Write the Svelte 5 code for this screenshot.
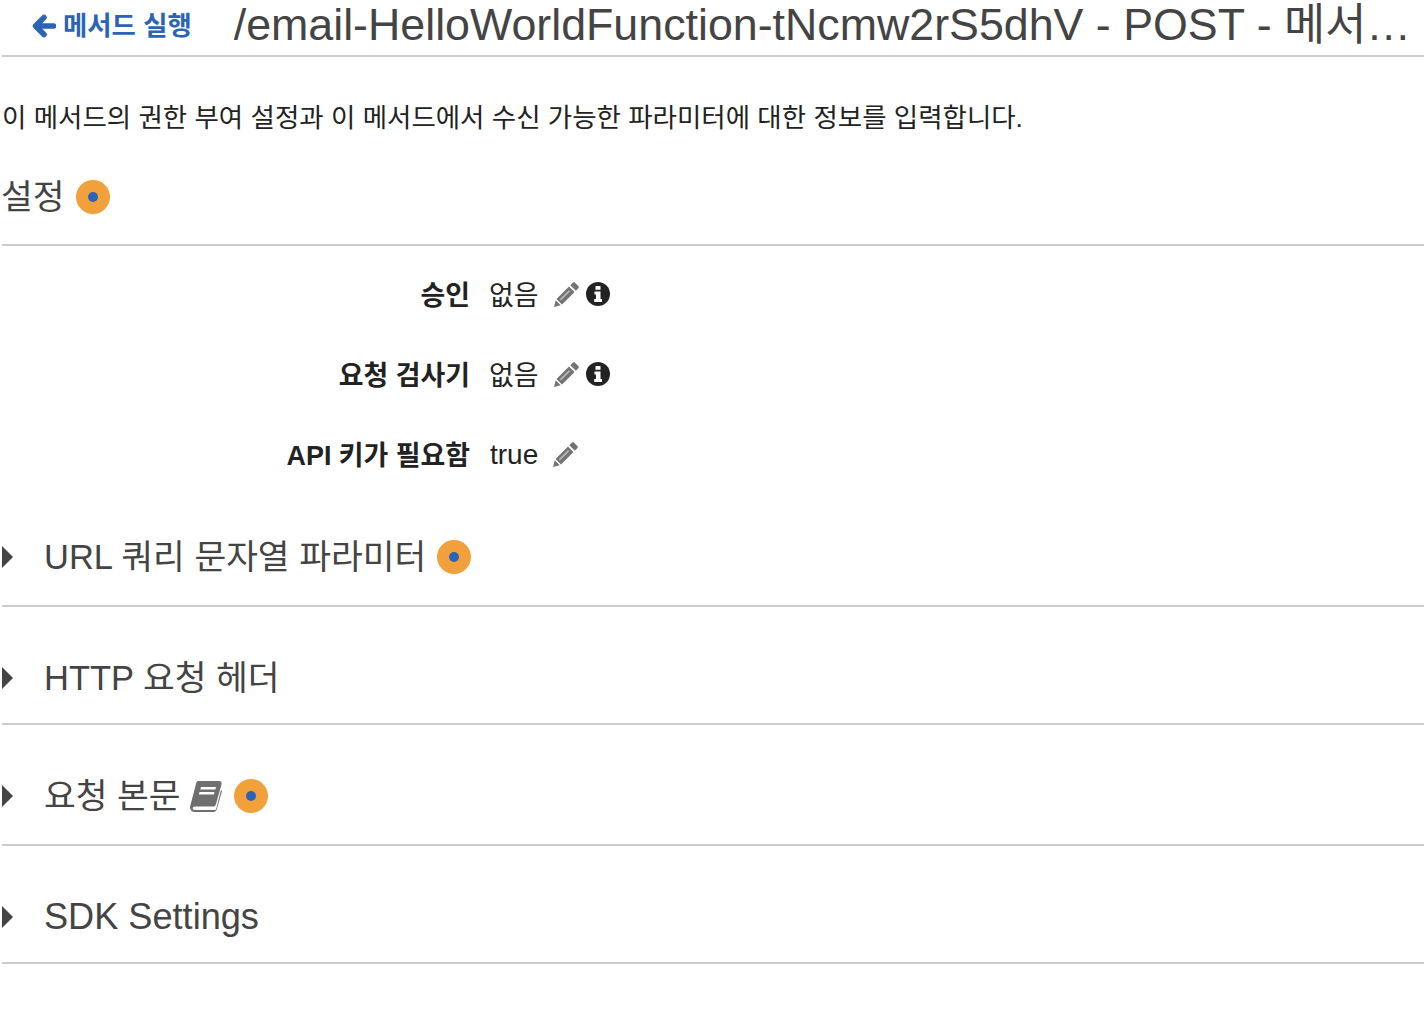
<script lang="ts">
	const settings = [
		{ label: '승인', value: '없음', info: true },
		{ label: '요청 검사기', value: '없음', info: true },
		{ label: 'API 키가 필요함', value: 'true', info: false }
	];
</script>

{#snippet dot()}
	<span class="dot"><span></span></span>
{/snippet}

{#snippet section(title, latin, badge, book)}
	<div class="section">
		<svg class="caret" viewBox="0 0 11 22" width="11" height="22"><path d="M0 0l11 11L0 22z" fill="#444" /></svg>
		<h3 class:latin>{title}</h3>
		{#if book}
			<svg class="book" viewBox="0 0 34 32" width="34" height="32">
				<path d="M9 1h21c2 0 3 1.500 2.500 3.500L27 24c-.5 2-1.500 2.500-3 2.500H6c-2 0-2.500 1-2.200 2 .3 1 1.200 1.500 2.700 1.500h19c1 0 1.500-.5 1.800-1.500L32 10l1 1-5.200 18.500C27.200 31 26 32 24.500 32H6C3 32 1 30 1 27.500c0-.8.100-1.500.4-2.300L7 4c.4-1.800 1-3 2-3z" fill="#6f6f6f" />
				<path d="M12 7h15l-.6 2.500h-15zM10.500 12h15l-.6 2.500h-15z" fill="#fff" />
			</svg>
		{/if}
		{#if badge}{@render dot()}{/if}
	</div>
{/snippet}

<div class="page">
	<header class="head">
		<a class="back" href="#top">
			<svg viewBox="0 0 24 24" width="24" height="24"><path d="M12 3.500L3.500 12l8.500 8.500M4.500 12H21.500" fill="none" stroke="#2b64b5" stroke-width="5.500" stroke-linecap="round" stroke-linejoin="round" /></svg>
			메서드 실행
		</a>
		<h1>/email-HelloWorldFunction-tNcmw2rS5dhV - POST - 메서드 실행</h1>
	</header>

	<p class="intro">이 메서드의 권한 부여 설정과 이 메서드에서 수신 가능한 파라미터에 대한 정보를 입력합니다.</p>

	<div class="settings-head">
		<h2>설정</h2>
		{@render dot()}
	</div>

	<div class="settings">
		{#each settings as row}
			<div class="row">
				<div class="label">{row.label}</div>
				<div class="value">
					<span class:latin={!row.info}>{row.value}</span>
					<svg class="pencil" viewBox="0 0 25 25" width="25" height="25">
						<path d="M19 .500c.6-.5 1.300-.5 1.800 0l3.700 3.700c.5.500.5 1.200 0 1.800l-2.700 2.700-5.500-5.500zM15 4.500l5.500 5.500L8 22.500 2.500 17zM1.700 18.300l5 5L0 25z" fill="#737373" />
						<path d="M15 8l1.300 1.300L7 18.600l-1.300-1.300z" fill="#b5b5b5" />
					</svg>
					{#if row.info}
						<svg class="info" viewBox="0 0 24 24" width="24" height="24">
							<circle cx="12" cy="12" r="12" fill="#222" />
							<path d="M9.500 4h5v3.800h-5zM8.500 9.500h6V17H16v3H8.200v-3H10v-4.500H8.500z" fill="#fff" />
						</svg>
					{/if}
				</div>
			</div>
		{/each}
	</div>

	<div class="sections">
		{@render section('URL 쿼리 문자열 파라미터', false, true, false)}
		{@render section('HTTP 요청 헤더', false, false, false)}
		{@render section('요청 본문', false, true, true)}
		{@render section('SDK Settings', true, false, false)}
	</div>
</div>

<style>
	:global(body) {
		background: #fff;
	}

	.page {
		padding-left: 2px;
		height: 1030px;
		overflow: hidden;
		font-family: 'Liberation Sans', 'Noto Sans CJK KR', sans-serif;
		color: #222;
	}

	.head {
		display: flex;
		align-items: center;
		height: 48px;
		padding: 0 10px 7px 30px;
		border-bottom: 2px solid #ccc;
	}

	.back {
		display: flex;
		align-items: center;
		gap: 7px;
		flex: none;
		font-size: 26.400px;
		font-weight: 700;
		color: #2b64b5;
		text-decoration: none;
		margin: -2px 42px 0 0;
	}

	.back svg {
		margin-top: 6px;
	}

	h1 {
		margin: -8px 0 0;
		flex: 1;
		min-width: 0;
		font-size: 44.750px;
		font-weight: 400;
		color: #444;
		white-space: nowrap;
		overflow: hidden;
		text-overflow: ellipsis;
	}

	.intro {
		margin: 43px 0 0;
		font-size: 26.470px;
		line-height: 36px;
	}

	.settings-head {
		display: flex;
		align-items: center;
		gap: 13px;
		height: 110px;
		border-bottom: 2px solid #ccc;
		padding-top: 12px;
		box-sizing: border-box;
	}

	h2 {
		margin: -4px 0 0 -1px;
		font-size: 34.500px;
		font-weight: 400;
		color: #444;
	}

	.settings-head .dot {
		margin-top: 2px;
		margin-left: -1px;
	}

	.dot {
		display: inline-flex;
		align-items: center;
		justify-content: center;
		width: 34px;
		height: 34px;
		margin-block: -0.500px;
		border-radius: 50%;
		background: #f2a03b;
	}

	.dot span {
		width: 10px;
		height: 10px;
		border-radius: 50%;
		background: #2b64b5;
	}

	.settings {
		display: flex;
		flex-direction: column;
		gap: 20px;
		padding-top: 18px;
	}

	.row {
		display: flex;
		align-items: center;
		height: 60px;
		font-size: 26.900px;
	}

	.label {
		width: 468px;
		margin-top: -2px;
		text-align: right;
		font-weight: 700;
	}

	.value {
		display: flex;
		align-items: center;
		margin-left: 20px;
	}

	.value span {
		margin: -2px 1px 0 -1px;
	}

	.value span.latin {
		margin: 2px 0 0;
		font-size: 28px;
	}

	.pencil {
		margin-left: 15px;
	}

	.info {
		margin-left: 7px;
	}

	.section {
		display: flex;
		align-items: center;
		padding: 56px 0 30px;
		border-bottom: 2px solid #ccc;
	}

	.section:nth-child(1) {
		padding-bottom: 32px;
	}

	.section:nth-child(3) {
		padding: 54px 0 32px;
	}

	.caret {
		flex: none;
		margin-right: 31px;
	}

	h3 {
		margin: 0;
		font-size: 34.500px;
		line-height: 30px;
		font-weight: 400;
		color: #444;
	}

	h3.latin {
		font-size: 36.150px;
	}

	.book {
		margin-left: 8px;
		margin-block: -1px;
	}

	.section .dot {
		margin-left: 11px;
	}
</style>
